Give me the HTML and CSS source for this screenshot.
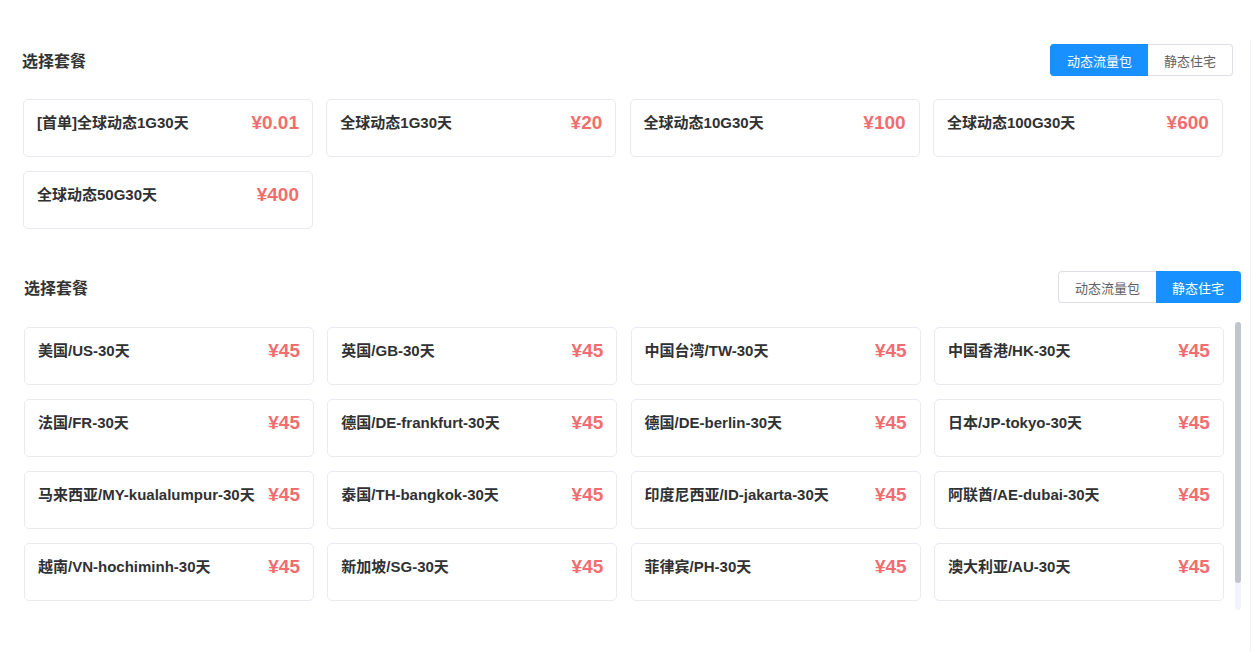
FILE: index.html
```html
<!DOCTYPE html>
<html lang="zh-CN">
<head>
<meta charset="utf-8">
<title>选择套餐</title>
<link rel="stylesheet" href="styles.css">
</head>
<body>
<div class="page">
  <main class="main">
    <section class="section section-dynamic">
      <div class="section-head">
        <h2 class="section-title">选择套餐</h2>
        <div class="seg">
          <span class="seg-btn active">动态流量包</span>
          <span class="seg-btn">静态住宅</span>
        </div>
      </div>
      <div class="grid">
        <div class="card"><span class="name">[首单]全球动态1G30天</span><span class="price">¥0.01</span></div>
        <div class="card"><span class="name">全球动态1G30天</span><span class="price">¥20</span></div>
        <div class="card"><span class="name">全球动态10G30天</span><span class="price">¥100</span></div>
        <div class="card"><span class="name">全球动态100G30天</span><span class="price">¥600</span></div>
        <div class="card"><span class="name">全球动态50G30天</span><span class="price">¥400</span></div>
      </div>
    </section>

    <section class="section section-static">
      <div class="section-head">
        <h2 class="section-title">选择套餐</h2>
        <div class="seg">
          <span class="seg-btn">动态流量包</span>
          <span class="seg-btn active">静态住宅</span>
        </div>
      </div>
      <div class="scroll">
        <div class="grid">
          <div class="card"><span class="name">美国/US-30天</span><span class="price">¥45</span></div>
          <div class="card"><span class="name">英国/GB-30天</span><span class="price">¥45</span></div>
          <div class="card"><span class="name">中国台湾/TW-30天</span><span class="price">¥45</span></div>
          <div class="card"><span class="name">中国香港/HK-30天</span><span class="price">¥45</span></div>
          <div class="card"><span class="name">法国/FR-30天</span><span class="price">¥45</span></div>
          <div class="card"><span class="name">德国/DE-frankfurt-30天</span><span class="price">¥45</span></div>
          <div class="card"><span class="name">德国/DE-berlin-30天</span><span class="price">¥45</span></div>
          <div class="card"><span class="name">日本/JP-tokyo-30天</span><span class="price">¥45</span></div>
          <div class="card"><span class="name">马来西亚/MY-kualalumpur-30天</span><span class="price">¥45</span></div>
          <div class="card"><span class="name">泰国/TH-bangkok-30天</span><span class="price">¥45</span></div>
          <div class="card"><span class="name">印度尼西亚/ID-jakarta-30天</span><span class="price">¥45</span></div>
          <div class="card"><span class="name">阿联酋/AE-dubai-30天</span><span class="price">¥45</span></div>
          <div class="card"><span class="name">越南/VN-hochiminh-30天</span><span class="price">¥45</span></div>
          <div class="card"><span class="name">新加坡/SG-30天</span><span class="price">¥45</span></div>
          <div class="card"><span class="name">菲律宾/PH-30天</span><span class="price">¥45</span></div>
          <div class="card"><span class="name">澳大利亚/AU-30天</span><span class="price">¥45</span></div>
        </div>
        <div class="scrollbar"><div class="scrollbar-thumb"></div></div>
      </div>
    </section>
  </main>
</div>
</body>
</html>
```

FILE: styles.css
```css
* { box-sizing: border-box; }

html, body {
  margin: 0;
  padding: 0;
  background: #ffffff;
  font-family: "Liberation Sans", "Noto Sans CJK SC", sans-serif;
  color: #303133;
}

.page {
  padding-top: 40px;
  height: 652px;
  overflow: hidden;
}

.main {
  width: 1251px;
  height: 612px;
  border-right: 1px solid #f2f2f4;
  padding-top: 4px;
}

.section-dynamic {
  margin-left: 22px;
  width: 1211px;
}

.section-static {
  margin-left: 24px;
  width: 1217px;
  margin-top: 42px;
}

.section-head {
  display: flex;
  align-items: center;
  justify-content: space-between;
  height: 32px;
}

.section-title {
  margin: 0;
  font-size: 16px;
  font-weight: bold;
  color: #333333;
}

.seg {
  display: flex;
  height: 32px;
}

.seg-btn {
  display: flex;
  align-items: center;
  padding: 0 16px;
  font-size: 13px;
  color: #606266;
  background: #ffffff;
  border: 1px solid #dcdfe6;
}

.seg-btn:first-child {
  border-radius: 4px 0 0 4px;
  border-right: none;
}

.seg-btn:last-child {
  border-radius: 0 4px 4px 0;
  border-left: none;
}

.seg-btn.active {
  background: #1890ff;
  border-color: #1890ff;
  color: #ffffff;
}

.grid {
  display: grid;
  grid-template-columns: repeat(4, 290px);
  column-gap: 13.3px;
  row-gap: 14px;
  align-content: start;
}

.section-dynamic .grid {
  margin-top: 23px;
  padding-left: 1px;
}

.card {
  height: 58px;
  border: 1px solid #e8eaef;
  border-radius: 5px;
  background: #ffffff;
  display: flex;
  align-items: flex-start;
  justify-content: space-between;
  padding: 11px 13px 0 13px;
}

.name {
  font-size: 15px;
  font-weight: bold;
  line-height: 24px;
  color: #303133;
  white-space: nowrap;
}

.price {
  font-size: 19px;
  font-weight: bold;
  line-height: 24px;
  color: #f26d6d;
  white-space: nowrap;
}

.scroll {
  margin-top: 19px;
  height: 288px;
  overflow: hidden;
  display: flex;
  justify-content: space-between;
}

.scroll .grid {
  padding-top: 5px;
}

.scrollbar {
  width: 6px;
  height: 288px;
  background: #f2f4fa;
  border-radius: 3px;
  flex: none;
}

.scrollbar-thumb {
  width: 6px;
  height: 261px;
  background: #c1c5cd;
  border-radius: 3px;
}
```
